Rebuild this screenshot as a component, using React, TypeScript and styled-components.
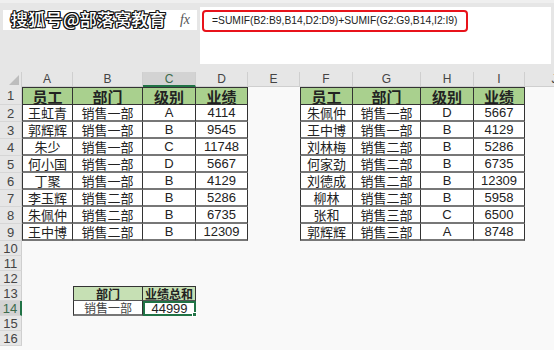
import React from "react";
import styled, { createGlobalStyle, css } from "styled-components";

const GlobalStyle = createGlobalStyle`
  html, body {
    margin: 0;
    padding: 0;
    background: #f9f9f9;
  }
  body {
    width: 554px;
    height: 350px;
    overflow: hidden;
    font-family: "Noto Sans CJK SC", "Liberation Sans", sans-serif;
    color: #222;
  }
`;

const GREEN = "#217346";
const COLS = [51, 70, 53, 52, 52, 53, 68, 53, 51, 60];
const LETTERS = "ABCDEFGHIJ".split("");
const ROW_H = [18, 17, 17, 17, 17, 17, 17, 17, 17, 15, 15, 15, 15, 15, 15, 15];

const left = [
  ["员工", "部门", "级别", "业绩"],
  ["王虹青", "销售一部", "A", "4114"],
  ["郭辉辉", "销售一部", "B", "9545"],
  ["朱少", "销售一部", "C", "11748"],
  ["何小国", "销售一部", "D", "5667"],
  ["丁聚", "销售一部", "B", "4129"],
  ["李玉辉", "销售二部", "B", "5286"],
  ["朱佩仲", "销售二部", "B", "6735"],
  ["王中博", "销售二部", "B", "12309"],
];

const right = [
  ["员工", "部门", "级别", "业绩"],
  ["朱佩仲", "销售一部", "D", "5667"],
  ["王中博", "销售一部", "B", "4129"],
  ["刘林梅", "销售二部", "B", "5286"],
  ["何家劲", "销售二部", "B", "6735"],
  ["刘德成", "销售二部", "B", "12309"],
  ["柳林", "销售二部", "B", "5958"],
  ["张和", "销售三部", "C", "6500"],
  ["郭辉辉", "销售三部", "A", "8748"],
];

type Kind = "empty" | "head" | "data" | "subhead" | "subdata" | "active";

interface CellInfo {
  text: string;
  kind: Kind;
  firstCol?: boolean;
  firstRow?: boolean;
}

function cellAt(r: number, c: number): CellInfo {
  if (r >= 1 && r <= 9 && c >= 0 && c <= 3) {
    return {
      text: left[r - 1][c],
      kind: r === 1 ? "head" : "data",
      firstCol: c === 0,
      firstRow: r === 1,
    };
  }
  if (r >= 1 && r <= 9 && c >= 5 && c <= 8) {
    return {
      text: right[r - 1][c - 5],
      kind: r === 1 ? "head" : "data",
      firstCol: c === 5,
      firstRow: r === 1,
    };
  }
  if (r === 13 && (c === 1 || c === 2)) {
    return { text: c === 1 ? "部门" : "业绩总和", kind: "subhead", firstCol: c === 1, firstRow: true };
  }
  if (r === 14 && c === 1) return { text: "销售一部", kind: "subdata", firstCol: true };
  if (r === 14 && c === 2) return { text: "44999", kind: "active" };
  return { text: "", kind: "empty" };
}

const Page = styled.div`
  width: 554px;
  height: 350px;
  display: flex;
  flex-direction: column;
  overflow: hidden;
  position: relative;
`;

const TopBar = styled.div`
  height: 72px;
  box-sizing: border-box;
  background: #e6e6e6;
  border-top: 3px solid #efefef;
  display: flex;
  align-items: flex-start;
  padding: 4px 3px 0 3px;
`;

const NameBox = styled.div`
  margin-top: 3px;
  width: 83px;
  height: 20px;
  background: #fff;
  font: 12px "Liberation Sans", sans-serif;
  line-height: 20px;
  padding-left: 6px;
  box-sizing: border-box;
  color: #333;
`;

const FuncBox = styled.div`
  margin-top: 3px;
  margin-left: 24px;
  width: 87px;
  height: 20px;
  background: #fff;
  display: flex;
  align-items: center;
  justify-content: flex-end;
  gap: 16px;
  padding-right: 7px;
  box-sizing: border-box;
`;

const Check = styled.span`
  font: 14px "DejaVu Sans", sans-serif;
  color: #c4c4c4;
`;

const Fx = styled.span`
  font: italic 14px "Liberation Serif", serif;
  color: #555;
`;

const FormulaInput = styled.div`
  margin-left: 3px;
  flex: 1;
  height: 57px;
  background: #fff;
  padding: 3px 0 0 2px;
  box-sizing: border-box;
`;

const RedBox = styled.div`
  width: 266px;
  height: 22px;
  box-sizing: border-box;
  border: 2px solid #e8131b;
  border-radius: 4px;
  padding-left: 8px;
  font: 10.3px "Liberation Sans", sans-serif;
  line-height: 18px;
  color: #222;
  white-space: nowrap;
`;

const Watermark = styled.div`
  position: absolute;
  top: 6px;
  left: 11px;
  font-size: 17px;
  font-weight: 500;
  color: #fff;
  letter-spacing: 0.3px;
  text-shadow: -1px -1px 0 #111, 1px -1px 0 #111, -1px 1px 0 #111, 1px 1px 0 #111,
    0 -1px 0 #111, 0 1px 0 #111, -1px 0 0 #111, 1px 0 0 #111;
`;

const Sheet = styled.div`
  flex: 1;
  display: flex;
  flex-direction: column;
  background: #f9f9f9;
`;

const Row = styled.div<{ $h: number }>`
  display: flex;
  height: ${(p) => p.$h}px;
  flex-shrink: 0;
`;

const Corner = styled.div`
  width: 22px;
  flex-shrink: 0;
  background: #e6e6e6;
  border-right: 1px solid #cfcfcf;
  box-sizing: border-box;
  position: relative;
  &::after {
    content: "";
    position: absolute;
    right: 2px;
    bottom: 2px;
    border-left: 10px solid transparent;
    border-bottom: 10px solid #bdbdbd;
  }
`;

const ColHead = styled.div<{ $w: number; $sel?: boolean }>`
  width: ${(p) => p.$w}px;
  flex-shrink: 0;
  box-sizing: border-box;
  background: ${(p) => (p.$sel ? "#d3d3d3" : "#e6e6e6")};
  border-right: 1px solid #cfcfcf;
  border-bottom: ${(p) => (p.$sel ? `2px solid ${GREEN}` : "1px solid #cfcfcf")};
  color: ${(p) => (p.$sel ? "#3c6b4c" : "#444")};
  font: 12px "Liberation Sans", sans-serif;
  display: flex;
  align-items: center;
  justify-content: center;
`;

const RowHead = styled.div<{ $sel?: boolean }>`
  width: 22px;
  flex-shrink: 0;
  box-sizing: border-box;
  background: ${(p) => (p.$sel ? "#d3d3d3" : "#e6e6e6")};
  border-right: ${(p) => (p.$sel ? `2px solid ${GREEN}` : "1px solid #cfcfcf")};
  border-bottom: 1px solid #d6d6d6;
  color: ${(p) => (p.$sel ? "#3c6b4c" : "#444")};
  font: 13px "Liberation Sans", sans-serif;
  display: flex;
  align-items: center;
  justify-content: center;
`;

const kindStyles: Record<Kind, ReturnType<typeof css>> = {
  empty: css``,
  head: css`
    background: #a9d08e;
    font-size: 15px;
    font-weight: 700;
    border-right: 1px solid #333;
    border-bottom: 1px solid #333;
  `,
  data: css`
    background: #fff;
    font-size: 13px;
    border-right: 1px solid #333;
    border-bottom: 2px solid #777;
  `,
  subhead: css`
    background: #c6e0b4;
    font-size: 12px;
    font-weight: 700;
    border-right: 1px solid #333;
    border-bottom: 1px solid #555;
  `,
  subdata: css`
    background: #fff;
    font-size: 12px;
    color: #444;
    border-right: 1px solid #333;
    border-bottom: 2px solid #777;
  `,
  active: css`
    background: #fff;
    font-size: 13px;
    border: 2px solid ${GREEN};
    &::after {
      content: "";
      position: absolute;
      right: -3px;
      bottom: -3px;
      width: 5px;
      height: 5px;
      background: ${GREEN};
      border: 1px solid #fff;
      box-sizing: border-box;
    }
  `,
};

const Cell = styled.div<{ $w: number; $kind: Kind; $firstCol?: boolean; $firstRow?: boolean; $num?: boolean }>`
  width: ${(p) => p.$w}px;
  flex-shrink: 0;
  box-sizing: border-box;
  position: relative;
  display: flex;
  align-items: center;
  justify-content: center;
  white-space: nowrap;
  font-family: ${(p) =>
    p.$num ? `"Liberation Sans", sans-serif` : `"Noto Sans CJK SC", "Liberation Sans", sans-serif`};
  ${(p) => kindStyles[p.$kind]}
  ${(p) => p.$firstCol && css`border-left: 1px solid #333;`}
  ${(p) => p.$firstRow && css`border-top: 1px solid #333;`}
`;

export default function App() {
  return (
    <>
      <GlobalStyle />
      <Page>
        <TopBar>
          <NameBox>C14</NameBox>
          <FuncBox>
            <Check>✓</Check>
            <Fx>fx</Fx>
          </FuncBox>
          <FormulaInput>
            <RedBox>=SUMIF(B2:B9,B14,D2:D9)+SUMIF(G2:G9,B14,I2:I9)</RedBox>
          </FormulaInput>
        </TopBar>
        <Watermark>搜狐号@部落窝教育</Watermark>
        <Sheet>
          <Row $h={15}>
            <Corner />
            {LETTERS.map((l, i) => (
              <ColHead key={l} $w={COLS[i]} $sel={l === "C"}>
                {l}
              </ColHead>
            ))}
          </Row>
          {ROW_H.map((h, idx) => {
            const r = idx + 1;
            return (
              <Row key={r} $h={h}>
                <RowHead $sel={r === 14}>{r}</RowHead>
                {COLS.map((w, c) => {
                  const info = cellAt(r, c);
                  const num = /^[0-9A-D]+$/.test(info.text);
                  return (
                    <Cell
                      key={c}
                      $w={w}
                      $kind={info.kind}
                      $firstCol={info.firstCol}
                      $firstRow={info.firstRow}
                      $num={num}
                    >
                      {info.text}
                    </Cell>
                  );
                })}
              </Row>
            );
          })}
        </Sheet>
      </Page>
    </>
  );
}
